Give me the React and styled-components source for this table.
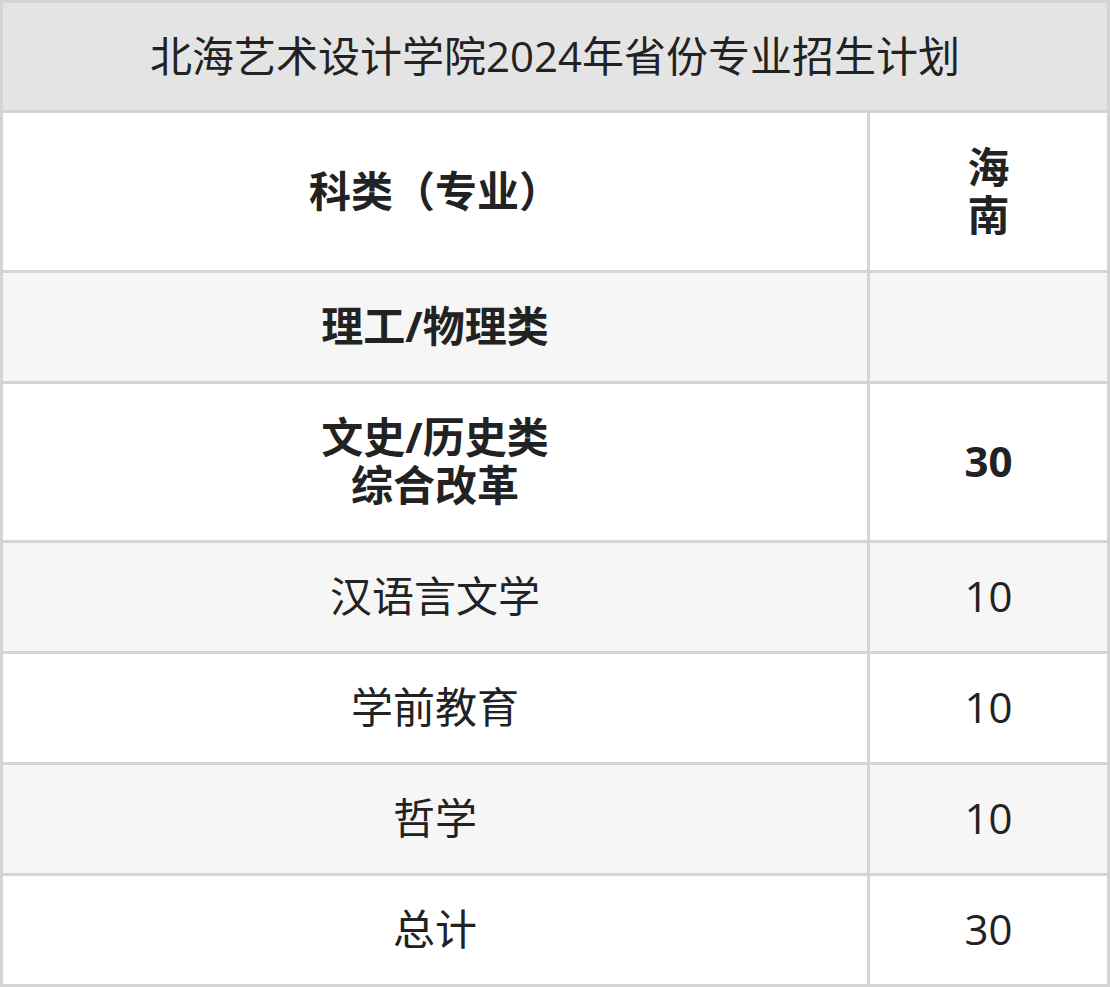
import React from 'react';
import styled, { createGlobalStyle } from 'styled-components';

const GlobalStyle = createGlobalStyle`
  body {
    margin: 0;
    background: #fff;
    font-family: "Open Sans", "Noto Sans CJK SC", sans-serif;
  }
`;

const Table = styled.table`
  width: 1110px;
  border-collapse: collapse;
  table-layout: fixed;
  color: #222;
  font-size: 42px;
  line-height: 48px;
`;

const Cell = styled.td`
  border: 3px solid #d4d4d4;
  text-align: center;
  vertical-align: middle;
  padding: 0 0 2px;
  font-weight: ${(p) => (p.$bold ? 700 : 400)};
`;

const TitleCell = styled(Cell)`
  background: #e4e4e4;
  font-weight: 400;
`;

const Row = styled.tr`
  height: ${(p) => p.$h}px;
  background: ${(p) => (p.$shade ? '#f6f6f6' : '#fff')};
`;

const rows = [
  { name: '科类（专业）', value: '海\n南', bold: true, h: 160 },
  { name: '理工/物理类', value: '', bold: true, h: 111, shade: true },
  { name: '文史/历史类\n综合改革', value: '30', bold: true, h: 159 },
  { name: '汉语言文学', value: '10', h: 111, shade: true },
  { name: '学前教育', value: '10', h: 111 },
  { name: '哲学', value: '10', h: 111, shade: true },
  { name: '总计', value: '30', h: 111 },
];

const Lines = ({ text }) =>
  text.split('\n').map((t, i) => (
    <React.Fragment key={i}>
      {i > 0 && <br />}
      {t}
    </React.Fragment>
  ));

const App = () => (
  <>
    <GlobalStyle />
    <Table>
      <colgroup>
        <col style={{ width: 867 }} />
        <col />
      </colgroup>
      <tbody>
        <Row $h={110}>
          <TitleCell colSpan={2}>北海艺术设计学院2024年省份专业招生计划</TitleCell>
        </Row>
        {rows.map((r, i) => (
          <Row key={i} $h={r.h} $shade={r.shade}>
            <Cell $bold={r.bold}>
              <Lines text={r.name} />
            </Cell>
            <Cell $bold={r.bold}>
              <Lines text={r.value} />
            </Cell>
          </Row>
        ))}
      </tbody>
    </Table>
  </>
);

export default App;
